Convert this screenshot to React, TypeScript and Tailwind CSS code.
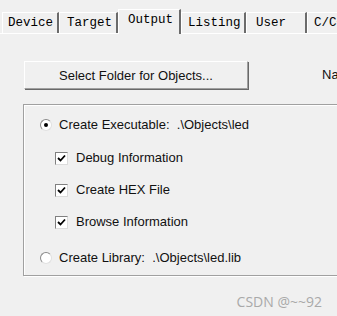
const TABS = [
  { id: "device", title: "Device", w: "w-[57px]", pl: "pl-[5px]" },
  { id: "target", title: "Target", w: "w-[59px]", pl: "pl-[7px]" },
  { id: "output", title: "Output", w: "w-[63px]", pl: "pl-[9px]" },
  { id: "listing", title: "Listing", w: "w-[65px]", pl: "pl-[6px]" },
  { id: "user", title: "User", w: "w-[61px]", pl: "pl-[9px]" },
  { id: "cc", title: "C/C++", w: "w-[60px]", pl: "pl-[6px]" },
];

const CheckBox = () => (
  <span className="w-[13px] h-[13px] shrink-0 bg-white border border-[#808080] border-r-[#dcdcdc] border-b-[#dcdcdc] flex items-center justify-center">
    <svg width="9" height="9" viewBox="0 0 9 9">
      <path d="M1 4 L3.5 6.5 L8 1.5" stroke="#000" strokeWidth="1.8" fill="none" />
    </svg>
  </span>
);

const Radio = ({ on }: { on?: boolean }) => (
  <span className="w-[12px] h-[12px] shrink-0 rounded-full bg-white border border-[#8a8a8a] border-r-[#e0e0e0] border-b-[#e0e0e0] flex items-center justify-center">
    {on && <span className="w-[4px] h-[4px] rounded-full bg-black" />}
  </span>
);

export default function App() {
  const active = "output";

  return (
    <div className="w-[337px] h-[316px] overflow-hidden bg-[#f0f0f0] font-['Liberation_Sans',Arial,sans-serif] text-[13px] text-[#111]">
      {/* Tabs */}
      <div className="flex items-end h-[33px] pl-[2px] font-['Liberation_Mono',monospace] text-[12.5px] text-black">
        {TABS.map((tab) =>
          tab.id === active ? (
            <div
              key={tab.id}
              className={`${tab.w} ${tab.pl} h-[25px] shrink-0 border-t border-l border-white border-r-2 border-r-[#6b6b6b] bg-[#f0f0f0] pt-[1px] leading-[18px] -mb-[1px] relative`}
            >
              {tab.title}
            </div>
          ) : (
            <div
              key={tab.id}
              className={`${tab.w} ${tab.pl} h-[21px] shrink-0 border-t border-l border-white border-r-2 border-r-[#6b6b6b] leading-[20px] whitespace-nowrap overflow-hidden`}
            >
              {tab.title}
            </div>
          )
        )}
      </div>

      <div className="border-t border-white">
        {/* Select folder */}
        <div className="flex items-center mt-[27px]">
          <button className="ml-[24px] w-[224px] h-[28px] shrink-0 whitespace-nowrap bg-[#f0f0f0] border-t border-l border-white border-r border-b border-r-[#a0a0a0] border-b-[#a0a0a0] shadow-[1px_1px_0_#696969] leading-none">
            Select Folder for Objects...
          </button>
          <span className="ml-[74px] shrink-0 whitespace-nowrap">Name of Executable:</span>
        </div>

        {/* Group box */}
        <div className="ml-[23px] mt-[15px] w-[340px] h-[172px] border border-[#a0a0a0] shadow-[inset_1px_1px_0_#ffffff,1px_1px_0_#ffffff] pt-[10px]">
          <div className="flex items-center h-[20px] pl-[16px] gap-[7px]">
            <Radio on />
            <span className="whitespace-pre">Create Executable:  .\Objects\led</span>
          </div>
          <div className="flex items-center h-[20px] pl-[31px] gap-[8px] mt-[13px]">
            <CheckBox />
            <span>Debug Information</span>
          </div>
          <div className="flex items-center h-[20px] pl-[31px] gap-[8px] mt-[12px]">
            <CheckBox />
            <span>Create HEX File</span>
          </div>
          <div className="flex items-center h-[20px] pl-[31px] gap-[8px] mt-[12px]">
            <CheckBox />
            <span>Browse Information</span>
          </div>
          <div className="flex items-center h-[20px] pl-[16px] gap-[7px] mt-[16px]">
            <Radio />
            <span className="whitespace-pre">Create Library:  .\Objects\led.lib</span>
          </div>
        </div>

        {/* watermark */}
        <div className="flex justify-end pr-[15px] mt-[15px] text-[#a9a9a9] text-[14px] font-['Open_Sans',sans-serif]">
          CSDN @~~92
        </div>
      </div>
    </div>
  );
}
